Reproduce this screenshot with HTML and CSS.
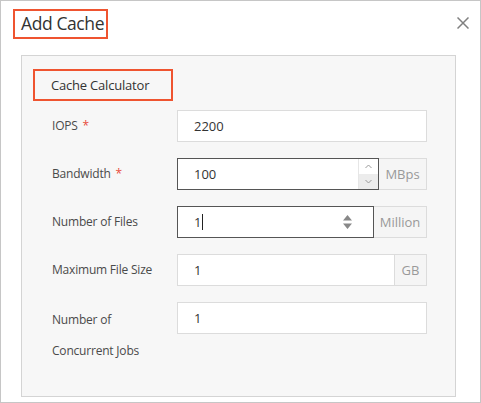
FILE: index.html
```html
<!DOCTYPE html>
<html lang="en">
<head>
    <meta charset="UTF-8">
    <title>Add Cache</title>
    <link rel="stylesheet" href="styles.css">
</head>
<body>
    <div class="dialog">
        <div class="dialog-header">
            <h1 class="dialog-title">Add Cache</h1>
            <span class="close">
                <svg width="12" height="12" viewBox="0 0 12 12"><path d="M0.5 0.5 L11.5 11.5 M11.5 0.5 L0.5 11.5" stroke="#808080" stroke-width="1.5" fill="none"/></svg>
            </span>
        </div>
        <div class="panel">
            <div class="panel-title">Cache Calculator</div>
            <div class="form">
                <div class="row">
                    <label>IOPS <span class="req">*</span></label>
                    <div class="field">
                        <div class="input">2200</div>
                    </div>
                </div>
                <div class="row">
                    <label>Bandwidth <span class="req">*</span></label>
                    <div class="field">
                        <div class="input focus">
                            <span class="value">100</span>
                            <span class="spinner">
                                <span class="spin-up">
                                    <svg width="7" height="5" viewBox="0 0 7 5"><path d="M0.5 4 L3.5 1 L6.5 4" stroke="#999" fill="none"/></svg>
                                </span>
                                <span class="spin-down">
                                    <svg width="7" height="5" viewBox="0 0 7 5"><path d="M0.5 1 L3.5 4 L6.5 1" stroke="#999" fill="none"/></svg>
                                </span>
                            </span>
                        </div>
                        <div class="addon">MBps</div>
                    </div>
                </div>
                <div class="row">
                    <label>Number of Files</label>
                    <div class="field">
                        <div class="input focus">
                            <span class="value">1<span class="caret"></span></span>
                            <svg class="stepper" width="9" height="14" viewBox="0 0 9 14"><path d="M4.5 0 L9 5.5 L0 5.5 Z M4.5 14 L9 8.5 L0 8.5 Z" fill="#888"/></svg>
                        </div>
                        <div class="addon wide">Million</div>
                    </div>
                </div>
                <div class="row">
                    <label>Maximum File Size</label>
                    <div class="field">
                        <div class="input">1</div>
                        <div class="addon small">GB</div>
                    </div>
                </div>
                <div class="row">
                    <label class="multi">Number of Concurrent Jobs</label>
                    <div class="field">
                        <div class="input">1</div>
                    </div>
                </div>
            </div>
        </div>
    </div>
</body>
</html>
```

FILE: styles.css
```css
body {
    margin: 0;
    font-family: 'Open Sans', 'Noto Sans', sans-serif;
    color: #333;
    background: #fff;
}

.dialog {
    width: 481px;
    height: 403px;
    box-sizing: border-box;
    border: 1px solid #c6c6c6;
    background: #fff;
    padding: 8px 24px 0 20px;
}

.dialog-header {
    display: flex;
    justify-content: space-between;
    align-items: flex-start;
    height: 46px;
}

.dialog-title {
    margin: 0 0 0 -8px;
    width: 95px;
    height: 30px;
    box-sizing: border-box;
    border: 2px solid #ef5430;
    padding-left: 6px;
    font-size: 17.5px;
    font-weight: normal;
    line-height: 25px;
    color: #333;
    letter-spacing: -0.4px;
}

.close {
    margin: 8px -13px 0 0;
    display: flex;
}

.panel {
    height: 342px;
    box-sizing: border-box;
    border: 1px solid #d4d4d4;
    background: #f7f7f7;
    padding: 13px 0 0 11px;
}

.panel-title {
    width: 140px;
    height: 32px;
    box-sizing: border-box;
    border: 2px solid #ef5430;
    padding-left: 16px;
    font-size: 13px;
    line-height: 28px;
    color: #333;
    letter-spacing: -0.2px;
}

.form {
    display: flex;
    flex-direction: column;
    gap: 16px;
    margin-top: 9px;
    padding-left: 19px;
}

.row {
    display: flex;
    align-items: flex-start;
}

.row label {
    width: 125px;
    font-size: 12px;
    line-height: 32px;
    color: #4a4a4a;
    letter-spacing: -0.2px;
}

.row label.multi {
    width: 110px;
    line-height: 31px;
    padding-top: 2px;
    margin-right: 15px;
}

.req {
    color: #e84b3c;
    margin-left: 2px;
}

.field {
    display: flex;
    width: 250px;
    height: 32px;
}

.input {
    flex: 1;
    display: flex;
    align-items: center;
    justify-content: space-between;
    box-sizing: border-box;
    border: 1px solid #dcdcdc;
    background: #fff;
    padding-left: 16px;
    font-size: 13px;
    color: #333;
}

.input.focus {
    border-color: #555;
}

.value {
    display: flex;
    align-items: center;
}

.caret {
    display: inline-block;
    width: 1px;
    height: 16px;
    background: #222;
    margin-left: 1px;
}

.spinner {
    display: flex;
    flex-direction: column;
    width: 19px;
    height: 30px;
    border-left: 1px solid #e6e6e6;
}

.spin-up,
.spin-down {
    flex: 1;
    display: flex;
    align-items: center;
    justify-content: center;
}

.spin-down {
    background: #ececec;
}

.stepper {
    margin-right: 21px;
}

.addon {
    width: 48px;
    box-sizing: border-box;
    border: 1px solid #dcdcdc;
    border-left: none;
    background: #f5f5f5;
    color: #999;
    font-size: 13px;
    display: flex;
    align-items: center;
    justify-content: center;
}

.addon.wide {
    width: 53px;
}

.addon.small {
    width: 32px;
}
```
